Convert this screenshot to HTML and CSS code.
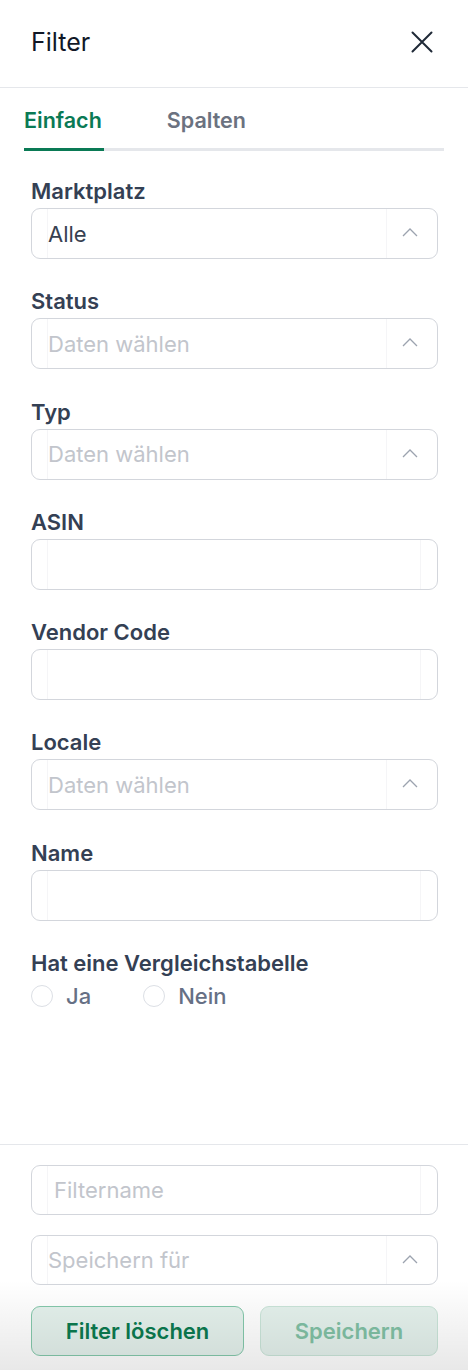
FILE: index.html
```html
<!DOCTYPE html>
<html lang="de">
<head>
<meta charset="utf-8">
<title>Filter</title>
<link rel="stylesheet" href="styles.css">
</head>
<body>
<div class="panel">
  <header class="header">
    <h1 class="title">Filter</h1>
    <button class="close" aria-label="Schließen">
      <svg width="22" height="22" viewBox="0 0 22 22"><path d="M1.5 1.5 L20.5 20.5 M20.5 1.5 L1.5 20.5" stroke="#1f2937" stroke-width="2" stroke-linecap="round" fill="none"/></svg>
    </button>
  </header>

  <nav class="tabs">
    <div class="tab active">Einfach</div>
    <div class="tab">Spalten</div>
  </nav>

  <form class="form">
    <div class="group">
      <label class="label">Marktplatz</label>
      <div class="field select">
        <span class="inner value">Alle</span>
        <span class="chev"><svg width="16" height="9" viewBox="0 0 16 9"><path d="M1 8 L8 1 L15 8" stroke="#9ca3af" stroke-width="1.3" fill="none"/></svg></span>
      </div>
    </div>
    <div class="group">
      <label class="label">Status</label>
      <div class="field select">
        <span class="inner placeholder">Daten wählen</span>
        <span class="chev"><svg width="16" height="9" viewBox="0 0 16 9"><path d="M1 8 L8 1 L15 8" stroke="#9ca3af" stroke-width="1.3" fill="none"/></svg></span>
      </div>
    </div>
    <div class="group">
      <label class="label">Typ</label>
      <div class="field select">
        <span class="inner placeholder">Daten wählen</span>
        <span class="chev"><svg width="16" height="9" viewBox="0 0 16 9"><path d="M1 8 L8 1 L15 8" stroke="#9ca3af" stroke-width="1.3" fill="none"/></svg></span>
      </div>
    </div>
    <div class="group">
      <label class="label">ASIN</label>
      <div class="field input"><span class="inner"></span></div>
    </div>
    <div class="group">
      <label class="label">Vendor Code</label>
      <div class="field input"><span class="inner"></span></div>
    </div>
    <div class="group">
      <label class="label">Locale</label>
      <div class="field select">
        <span class="inner placeholder">Daten wählen</span>
        <span class="chev"><svg width="16" height="9" viewBox="0 0 16 9"><path d="M1 8 L8 1 L15 8" stroke="#9ca3af" stroke-width="1.3" fill="none"/></svg></span>
      </div>
    </div>
    <div class="group">
      <label class="label">Name</label>
      <div class="field input"><span class="inner"></span></div>
    </div>
    <div class="group">
      <label class="label">Hat eine Vergleichstabelle</label>
      <div class="radios">
        <span class="radio"><span class="circle"></span>Ja</span>
        <span class="radio"><span class="circle"></span>Nein</span>
      </div>
    </div>
  </form>

  <footer class="footer">
    <div class="field input"><span class="inner placeholder pad">Filtername</span></div>
    <div class="field select">
      <span class="inner placeholder">Speichern für</span>
      <span class="chev"><svg width="16" height="9" viewBox="0 0 16 9"><path d="M1 8 L8 1 L15 8" stroke="#9ca3af" stroke-width="1.3" fill="none"/></svg></span>
    </div>
    <div class="buttons">
      <button class="btn primary">Filter löschen</button>
      <button class="btn disabled">Speichern</button>
    </div>
  </footer>
  <div class="shade"></div>
</div>
</body>
</html>
```

FILE: styles.css
```css
* { box-sizing: border-box; }
html, body { margin: 0; padding: 0; background: #fff; }
body { font-family: Inter, "Noto Sans", "Liberation Sans", sans-serif; color: #374151; }

.panel {
  position: relative;
  width: 468px;
  height: 1370px;
  display: flex;
  flex-direction: column;
  background: #fff;
  overflow: hidden;
}

.header {
  height: 88px;
  border-bottom: 1px solid #e5e7eb;
  display: flex;
  align-items: center;
  justify-content: space-between;
  padding: 0 35px 3px 31px;
  flex: none;
}
.title {
  margin: 0;
  font-size: 25px;
  line-height: 30px;
  font-weight: 400;
  color: #111827;
}
.close {
  border: 0;
  background: none;
  padding: 0;
  width: 22px;
  height: 22px;
  display: flex;
}

.tabs {
  display: flex;
  margin: 0 24px;
  border-bottom: 3px solid #e5e7eb;
  gap: 63px;
  flex: none;
}
.tab {
  padding: 19px 2px 15px 0;
  font-size: 21.5px;
  line-height: 26px;
  font-weight: 600;
  color: #6b7280;
  margin-bottom: -3px;
  border-bottom: 3px solid transparent;
}
.tab.active {
  color: #0a7a55;
  border-bottom-color: #0a7a55;
}

.form {
  padding: 26px 30px 0 31px;
  display: flex;
  flex-direction: column;
  gap: 28.3px;
}
.label {
  display: block;
  font-size: 22px;
  line-height: 28px;
  font-weight: 600;
  color: #344054;
  margin-bottom: 3px;
}

.field {
  height: 51px;
  border: 1.5px solid #d3d6dc;
  border-radius: 9px;
  display: flex;
  align-items: stretch;
  background: #fff;
}
.inner {
  flex: 1;
  margin-left: 15px;
  margin-right: 16px;
  border-left: 1px solid #f5f5f7;
  border-right: 1px solid #f5f5f7;
  display: flex;
  align-items: center;
  font-size: 22px;
}
.select .inner { margin-right: 0; }
.inner.value { color: #374151; }
.inner.placeholder { color: #c2c5cc; }
.inner.pad { padding-left: 6px; }
.chev {
  width: 50px;
  flex: none;
  display: flex;
  align-items: center;
  justify-content: center;
  padding-right: 5px;
  padding-bottom: 2px;
}

.radios {
  display: flex;
  gap: 52px;
  height: 32px;
  align-items: center;
}
.radio {
  display: flex;
  align-items: center;
  gap: 13px;
  font-size: 22px;
  color: #667085;
  font-weight: 500;
}
.circle {
  width: 22px;
  height: 22px;
  border-radius: 50%;
  border: 1.5px solid #dcdfe5;
  background: #fff;
}

.footer {
  margin-top: auto;
  border-top: 1px solid #e5e7eb;
  padding: 20px 30px 14px 31px;
  display: flex;
  flex-direction: column;
  gap: 20px;
  flex: none;
}
.footer .field { height: 50px; }
.buttons {
  display: flex;
  gap: 16px;
  margin-top: 1px;
}
.btn {
  flex: 1 1 auto;
  height: 50px;
  padding: 0 30px;
  border-radius: 9px;
  font-family: inherit;
  font-size: 22px;
  font-weight: 600;
  background: #e4f1ec;
}
.btn.primary {
  border: 1.5px solid #84c8ab;
  color: #0b7a4f;
}
.btn.disabled {
  border: 1.5px solid #c9e4d8;
  color: #80c0a4;
}

.shade {
  position: absolute;
  left: 0;
  right: 0;
  bottom: 0;
  height: 90px;
  background: linear-gradient(to bottom, rgba(0,0,0,0), rgba(0,0,0,0.09));
  pointer-events: none;
}
```
